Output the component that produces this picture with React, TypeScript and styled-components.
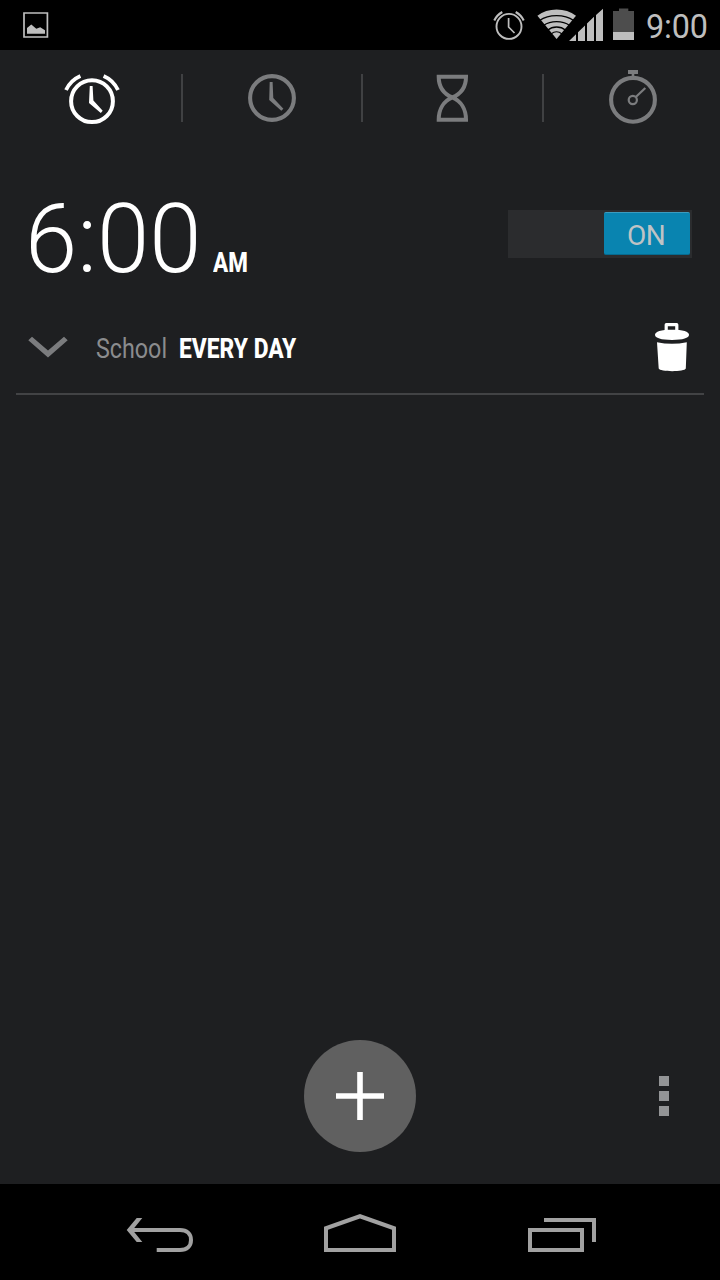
import React from "react";
import styled, { createGlobalStyle } from "styled-components";

const GlobalStyle = createGlobalStyle`
  * { box-sizing: border-box; }
  body { margin: 0; background: #000; font-family: Roboto, sans-serif; }
  svg { display: block; flex: none; }
  button { border: 0; padding: 0; margin: 0; background: none; font: inherit; color: inherit; }
`;

const Screen = styled.div`
  display: flex;
  flex-direction: column;
  width: 720px;
  height: 1280px;
  overflow: hidden;
  background: #1e1f21;
`;

const StatusBar = styled.header`
  display: flex;
  flex: none;
  justify-content: space-between;
  height: 50px;
  padding: 8px 12px 0 23px;
  background: #000;
  color: #bebebe;
`;

const StatusIcons = styled.div`
  display: flex;
  align-items: flex-start;
`;

const StatusIcon = styled.svg<{ $after?: number }>`
  margin-right: ${(p) => p.$after ?? 0}px;
`;

const StatusClock = styled.span`
  font-size: 32.4px;
  line-height: 38px;
  letter-spacing: -0.2px;
  width: 62px;
  white-space: nowrap;
`;

const Tabs = styled.nav`
  display: flex;
  flex: none;
  align-items: center;
  gap: 61px;
  height: 96px;
  padding-left: 64px;
`;

const Tab = styled.button<{ $active?: boolean }>`
  flex: none;
  color: ${(p) => (p.$active ? "#fff" : "#7b7c7e")};
`;

const TabDivider = styled.span<{ $shift?: number }>`
  flex: none;
  width: 2px;
  height: 48px;
  margin-left: ${(p) => p.$shift ?? 0}px;
  background: #404143;
`;

const AlarmCard = styled.section`
  display: flex;
  flex-direction: column;
  flex: none;
  height: 249px;
  margin: 0 16px;
  border-bottom: 2px solid #424345;
`;

const AlarmMain = styled.div`
  display: flex;
  align-items: flex-start;
  justify-content: space-between;
  height: 154px;
  padding: 37px 12px 0 9px;
`;

const Time = styled.div`
  display: flex;
  align-items: baseline;
  color: #fff;
  white-space: nowrap;
`;

const TimeDigits = styled.span`
  display: inline-block;
  width: 188px;
  font-size: 97px;
  font-weight: 340;
  line-height: 112px;
  transform: scaleX(0.97);
  transform-origin: left;
`;

const Condensed = styled.span<{ $width: number; $scale: number; $bold?: boolean }>`
  display: inline-block;
  width: ${(p) => p.$width}px;
  font-size: 28.4px;
  line-height: 36px;
  font-weight: ${(p) => (p.$bold ? 800 : 400)};
  color: ${(p) => (p.$bold ? "#fff" : "#8b8c8e")};
  white-space: nowrap;
  transform: scaleX(${(p) => p.$scale});
  transform-origin: left;
`;

const Switch = styled.button`
  display: flex;
  justify-content: flex-end;
  width: 184px;
  height: 48px;
  margin-top: 27px;
  padding: 2px 2px 3px;
  background: #2b2c2e;
`;

const Thumb = styled.span`
  width: 86px;
  height: 43px;
  border-radius: 2px;
  background: #0984b0;
  border-top: 1px solid #3c9cbf;
  border-bottom: 1px solid #066b90;
  color: #bfc3c5;
  font-size: 28px;
  letter-spacing: -0.6px;
  line-height: 46px;
  padding-right: 2px;
  text-align: center;
`;

const AlarmDetails = styled.div`
  display: flex;
  align-items: center;
  height: 93px;
  padding: 0 12px;
`;

const Labels = styled.div`
  display: flex;
  flex: 1;
  margin-left: 28px;
  padding-top: 5px;
`;

const Spacer = styled.div`
  flex: 1;
`;

const Actions = styled.div`
  display: grid;
  grid-template-columns: 1fr 112px 1fr;
  align-items: center;
  flex: none;
  height: 112px;
  margin-bottom: 32px;
`;

const AddButton = styled.button`
  grid-column: 2;
  display: grid;
  place-items: center;
  width: 112px;
  height: 112px;
  border-radius: 50%;
  background: #606060;
`;

const MenuButton = styled.button`
  display: flex;
  flex-direction: column;
  justify-self: end;
  gap: 5px;
  margin-right: 51px;
`;

const MenuDot = styled.span`
  width: 10px;
  height: 10px;
  background: #939496;
`;

const NavBar = styled.footer`
  display: flex;
  flex: none;
  gap: 130px;
  height: 96px;
  padding: 28px 0 0 126px;
  background: #000;
  color: #a1a1a1;
`;

const RecentIcon = styled.svg`
  margin-left: 2px;
`;

const App = () => (
  <Screen>
    <GlobalStyle />
    <StatusBar>
      <svg width="26" height="32" viewBox="0 0 26 32" fill="currentColor">
        <path d="M1 5H24.4V29H1Z" fill="none" stroke="currentColor" strokeWidth="1.7" />
        <path d="M4 25.8V20L8.3 16.6L13.3 20.8L17.2 19.2L22 22.3V25.8Z" />
      </svg>
      <StatusIcons>
        <StatusIcon $after={12} width="32" height="34" viewBox="0 0 32 34" fill="none" stroke="currentColor">
          <circle cx="16" cy="18.4" r="12.5" strokeWidth="1.9" />
          <path d="M1.3 12.5Q3.7 7.2 9.3 4M22.7 4Q28.3 7.2 30.7 12.5" strokeWidth="2.1" />
          <path d="M15.6 10V19L21.5 25" strokeWidth="1.7" />
        </StatusIcon>
        <StatusIcon $after={10} width="66" height="34" viewBox="0 0 66 34" fill="currentColor">
          <path d="M19.6 31L.4 7.8Q8.5 1.5 19.6 1.5T39 7.8Z" />
          <path d="M2.5 12.5Q9.5 7.7 19.6 7.7T36.7 12.5M6.5 17.5Q12 13.6 19.6 13.6T32.7 17.5M10.5 22.3Q14.5 19 19.6 19T28.7 22.3" fill="none" stroke="#000" strokeWidth="1.3" />
          <path d="M14 26Q19.6 21.5 25 26" fill="none" stroke="#000" strokeWidth="1.1" />
          <path d="M32 33L39 26.2V33ZM41 33V24.3L48 17.5V33ZM50 33V15.6L57 8.8V33ZM59 33V7L66 .8V33Z" />
        </StatusIcon>
        <StatusIcon $after={12} width="21" height="34" viewBox="0 0 21 34">
          <path d="M0 3H6V.5H15.3V3H21V24H0Z" fill="#4d4d4d" />
          <path d="M0 24H21V32H0Z" fill="currentColor" />
        </StatusIcon>
        <StatusClock>9:00</StatusClock>
      </StatusIcons>
    </StatusBar>

    <Tabs>
      <Tab $active aria-label="Alarm">
        <svg width="56" height="56" viewBox="0 0 56 56" fill="currentColor">
          <circle cx="28" cy="31.2" r="20.9" fill="none" stroke="currentColor" strokeWidth="4" />
          <path d="M2 20A28.3 28.3 0 0 1 16.4 5.9M39.6 5.9A28.3 28.3 0 0 1 54 20" fill="none" stroke="currentColor" strokeWidth="3.8" />
          <path d="M25.8 16H28.6L29.4 30.5L38.7 40.7L36.8 43L25 33Z" />
        </svg>
      </Tab>
      <TabDivider />
      <Tab aria-label="Clock">
        <svg width="56" height="56" viewBox="0 0 56 56" fill="currentColor">
          <circle cx="28" cy="28" r="21.9" fill="none" stroke="currentColor" strokeWidth="4.1" />
          <path d="M25.7 12H28.6L29.3 28L39.4 38.7L37.3 40.8L25.2 30Z" />
        </svg>
      </Tab>
      <TabDivider />
      <Tab aria-label="Timer">
        <svg width="56" height="56" viewBox="0 0 56 56" fill="none" stroke="currentColor" strokeWidth="4">
          <path d="M14.7 6.7H42C42 17 37 23.8 28.3 27.4C19.7 23.8 14.7 17 14.7 6.7ZM14.7 49.8H42C42 39.5 37 31 28.3 27.4C19.7 31 14.7 39.5 14.7 49.8Z" />
        </svg>
      </Tab>
      <TabDivider $shift={1} />
      <Tab aria-label="Stopwatch">
        <svg width="56" height="56" viewBox="0 0 56 56" fill="none" stroke="currentColor">
          <circle cx="28" cy="29.8" r="21.9" strokeWidth="4.1" />
          <circle cx="27.8" cy="30" r="4.1" strokeWidth="2.2" />
          <path d="M30.8 27L40.3 18" strokeWidth="2.2" />
          <path d="M23 0H33V4H29.3V8H26.7V4H23Z" fill="currentColor" stroke="none" />
        </svg>
      </Tab>
    </Tabs>

    <AlarmCard>
      <AlarmMain>
        <Time>
          <TimeDigits>6:00</TimeDigits>
          <Condensed $bold $width={36} $scale={0.79}>AM</Condensed>
        </Time>
        <Switch role="switch" aria-checked="true">
          <Thumb>ON</Thumb>
        </Switch>
      </AlarmMain>
      <AlarmDetails>
        <svg width="40" height="34" viewBox="0 0 40 34" fill="#7b7c7e">
          <path d="M.3 10.2L4 6.7L20 20.5L36 6.7L39.7 10.2L20 27.6Z" />
        </svg>
        <Labels>
          <Condensed $width={83} $scale={0.82}>School</Condensed>
          <Condensed $bold $width={120} $scale={0.803}>EVERY DAY</Condensed>
        </Labels>
        <svg width="40" height="54" viewBox="0 0 40 54" fill="#fff">
          <path d="M14.2 12V4.7H24.8V12" fill="none" stroke="#fff" strokeWidth="3.2" strokeLinejoin="round" />
          <path d="M3 14.8C3 11.5 9 9.7 20 9.7S37 11.5 37 14.8S31 20 20 20S3 18 3 14.8Z" />
          <path d="M5 22.2Q20 25.2 34.8 22.2L33.8 48.5C33 52 7.5 52 6.7 48.5Z" />
        </svg>
      </AlarmDetails>
    </AlarmCard>

    <Spacer />

    <Actions>
      <AddButton aria-label="Add alarm">
        <svg width="48" height="48" viewBox="0 0 48 48" stroke="#fff" strokeWidth="5.6">
          <path d="M24 0V48M0 24H48" />
        </svg>
      </AddButton>
      <MenuButton aria-label="More options">
        <MenuDot />
        <MenuDot />
        <MenuDot />
      </MenuButton>
    </Actions>

    <NavBar>
      <svg width="68" height="44" viewBox="0 0 68 44" fill="currentColor">
        <path d="M.7 18L10.7 6H16.3L6.6 18L16.3 30H10.7Z" />
        <path d="M5 18H54C61 18 65 22 65 28S61 38 54 38H30.7" fill="none" stroke="currentColor" strokeWidth="4" />
      </svg>
      <svg width="72" height="44" viewBox="0 0 72 44" fill="currentColor">
        <path fillRule="evenodd" d="M0 14.7L36 2L72 14.7V40H0ZM4 17.8V36H68V17.8L36 6.5Z" />
      </svg>
      <RecentIcon width="68" height="44" viewBox="0 0 68 44" fill="none" stroke="currentColor" strokeWidth="4">
        <path d="M2 18H54V38H2ZM16 8H66V30" />
      </RecentIcon>
    </NavBar>
  </Screen>
);

export default App;
